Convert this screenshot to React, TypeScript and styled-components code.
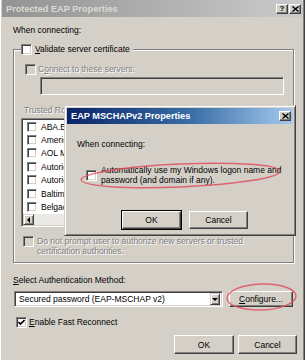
import React from "react";
import styled, { createGlobalStyle, css } from "styled-components";

const FACE = "#d4d0c8";

const Global = createGlobalStyle`
  html, body { margin: 0; padding: 0; background: ${FACE}; }
  body { font-family: "Liberation Sans", Arial, sans-serif; font-size: 8.5px; color: #000; }
  * { box-sizing: border-box; }
`;

const Window = styled.div`
  position: relative;
  width: 305px;
  height: 360px;
  overflow: hidden;
  background: ${FACE};
  padding: 0 2px;
  box-shadow: inset 1px 0 0 #fff, inset -1px 0 0 #404040, inset -2px 0 0 #808080;
`;

const TitleBar = styled.div<{ $active?: boolean }>`
  display: flex;
  align-items: center;
  justify-content: space-between;
  height: ${(p) => (p.$active ? 16 : 17)}px;
  padding: 0 2px 0 4px;
  font-weight: bold;
  font-size: 9.2px;
  white-space: nowrap;
  ${(p) =>
    p.$active
      ? css`
          background: linear-gradient(to right, #0a246a, #3a6ea5 55%, #a6caf0);
          color: #fff;
        `
      : css`
          background: linear-gradient(to right, #939393, #b4b4b4 60%, #cbcbcb);
          color: #dcd8d2;
        `}
`;

const CaptionButtons = styled.div`
  display: flex;
  gap: 1px;
`;

const CaptionButton = styled.span`
  display: flex;
  align-items: center;
  justify-content: center;
  width: 12px;
  height: 10px;
  background: ${FACE};
  border: 1px solid;
  border-color: #fff #404040 #404040 #fff;
  box-shadow: inset -1px -1px 0 #808080;
  color: #000;
  font-size: 8px;
  font-weight: bold;
  line-height: 1;
`;

const Body = styled.div`
  display: flex;
  flex-direction: column;
  padding: 8px 9px 0 11px;
`;

const Text = styled.div<{ $disabled?: boolean }>`
  line-height: 11px;
  white-space: nowrap;
  ${(p) =>
    p.$disabled &&
    css`
      color: #808080;
      text-shadow: 1px 1px 0 #fff;
    `}
`;

const U = styled.span`
  text-decoration: underline;
`;

const Box = styled.span<{ $disabled?: boolean; $size?: number }>`
  flex: none;
  display: inline-flex;
  align-items: center;
  justify-content: center;
  width: ${(p) => p.$size ?? 11}px;
  height: ${(p) => p.$size ?? 11}px;
  background: ${(p) => (p.$disabled ? FACE : "#fff")};
  border: 1px solid;
  border-color: #808080 #fff #fff #808080;
  box-shadow: inset 1px 1px 0 #404040, inset -1px -1px 0 ${FACE};
`;

const Check = ({ checked, disabled, size }: { checked?: boolean; disabled?: boolean; size?: number }) => (
  <Box $disabled={disabled} $size={size}>
    {checked && (
      <svg width="7" height="7" viewBox="0 0 7 7">
        <path d="M0.5 3 L2.5 5 L6.5 1" stroke="#000" strokeWidth="1.6" fill="none" />
      </svg>
    )}
  </Box>
);

const Group = styled.fieldset`
  margin: 8px 0 0;
  padding: 0 9px 6px 7px;
  min-width: 0;
  border: 1px solid #808080;
  box-shadow: 1px 1px 0 #fff, inset 1px 1px 0 #fff;
`;

const Legend = styled.legend`
  display: flex;
  align-items: center;
  gap: 3px;
  padding: 0 3px 0 0;
  background: ${FACE};
  line-height: 11px;
`;

const CheckRow = styled.div<{ $top?: number; $left?: number; $gap?: number; $align?: string }>`
  display: flex;
  align-items: ${(p) => p.$align ?? "center"};
  gap: ${(p) => p.$gap ?? 3}px;
  margin-top: ${(p) => p.$top ?? 0}px;
  margin-left: ${(p) => p.$left ?? 0}px;
`;

const DisabledInput = styled.div`
  height: 18px;
  margin: 2px 0 0 19px;
  background: ${FACE};
  border: 1px solid;
  border-color: #808080 #fff #fff #808080;
  box-shadow: inset 1px 1px 0 #404040, inset -1px -1px 0 ${FACE};
`;

const ListBox = styled.div`
  display: flex;
  flex-direction: column;
  height: 109px;
  margin-top: 2px;
  background: #fff;
  border: 1px solid;
  border-color: #808080 #fff #fff #808080;
  box-shadow: inset 1px 1px 0 #404040, inset -1px -1px 0 ${FACE};
  padding: 1px;
  overflow: hidden;
`;

const ListRow = styled.div`
  display: flex;
  align-items: center;
  gap: 4px;
  height: 13.4px;
  padding-left: 4px;
  white-space: nowrap;
`;

const HScroll = styled.div`
  display: flex;
  margin-top: auto;
  height: 11px;
  background: #ebe9e5;
`;

const ScrollButton = styled.span`
  display: flex;
  align-items: center;
  justify-content: center;
  width: 11px;
  height: 11px;
  background: ${FACE};
  border: 1px solid;
  border-color: ${FACE} #404040 #404040 ${FACE};
  box-shadow: inset 1px 1px 0 #fff, inset -1px -1px 0 #808080;
`;

const Tri = styled.span<{ $dir: "left" | "down" }>`
  width: 0;
  height: 0;
  ${(p) =>
    p.$dir === "left"
      ? css`
          border-top: 3px solid transparent;
          border-bottom: 3px solid transparent;
          border-right: 3px solid #000;
        `
      : css`
          border-left: 3.5px solid transparent;
          border-right: 3.5px solid transparent;
          border-top: 3.5px solid #000;
        `}
`;

const Wrap = styled.div<{ $disabled?: boolean }>`
  line-height: 10px;
  ${(p) =>
    p.$disabled &&
    css`
      color: #808080;
      text-shadow: 1px 1px 0 #fff;
    `}
`;

const ComboRow = styled.div`
  display: flex;
  align-items: flex-start;
  gap: 6px;
  margin-top: 5px;
  margin-left: 1px;
`;

const Combo = styled.div`
  display: flex;
  align-items: center;
  width: 209px;
  height: 16px;
  background: #fff;
  border: 1px solid;
  border-color: #808080 #fff #fff #808080;
  box-shadow: inset 1px 1px 0 #404040, inset -1px -1px 0 ${FACE};
  padding: 2px 2px 2px 4px;
`;

const ComboText = styled.span`
  flex: 1;
  white-space: nowrap;
`;

const DropButton = styled(ScrollButton)`
  width: 10px;
  height: 12px;
`;

const Button = styled.button<{ $w: number; $h?: number; $default?: boolean }>`
  display: flex;
  align-items: center;
  justify-content: center;
  width: ${(p) => p.$w}px;
  height: ${(p) => p.$h ?? 19}px;
  padding: 0;
  font: inherit;
  color: #000;
  background: ${FACE};
  border: 1px solid;
  border-color: #fff #404040 #404040 #fff;
  box-shadow: inset -1px -1px 0 #808080;
  ${(p) =>
    p.$default &&
    css`
      outline: 1px solid #000;
      border-color: #fff #404040 #404040 #fff;
    `}
`;

const ButtonRow = styled.div<{ $top: number; $gap: number; $justify?: string; $padLeft?: number }>`
  display: flex;
  justify-content: ${(p) => p.$justify ?? "flex-end"};
  gap: ${(p) => p.$gap}px;
  margin-top: ${(p) => p.$top}px;
  margin-right: ${(p) => (p.$justify ? 0 : -3)}px;
  padding-left: ${(p) => p.$padLeft ?? 0}px;
`;

const Dialog = styled.div`
  position: absolute;
  left: 64px;
  top: 105px;
  width: 232px;
  height: 131px;
  background: ${FACE};
  padding: 2px;
  border: 1px solid;
  border-color: ${FACE} #404040 #404040 ${FACE};
  box-shadow: inset 1px 1px 0 #fff, inset -1px -1px 0 #808080;
`;

const DialogBody = styled.div`
  display: flex;
  flex-direction: column;
  padding: 15px 0 0 10px;
`;

const Ellipse = styled.svg<{ $x: number; $y: number; $w: number; $h: number; $rot: number }>`
  position: absolute;
  left: ${(p) => p.$x}px;
  top: ${(p) => p.$y}px;
  width: ${(p) => p.$w}px;
  height: ${(p) => p.$h}px;
  transform: rotate(${(p) => p.$rot}deg);
  overflow: visible;
  pointer-events: none;
`;

const RedRing = ({ x, y, w, h, rot }: { x: number; y: number; w: number; h: number; rot: number }) => (
  <Ellipse $x={x} $y={y} $w={w} $h={h} $rot={rot} viewBox={`0 0 ${w} ${h}`}>
    <ellipse cx={w / 2} cy={h / 2} rx={w / 2 - 1} ry={h / 2 - 1} fill="none" stroke="#e0505e" strokeWidth="1.4" opacity="0.85" />
  </Ellipse>
);

const CloseGlyph = () => (
  <svg width="7" height="6" viewBox="0 0 7 6">
    <path d="M0.5 0.5 L6.5 5.5 M6.5 0.5 L0.5 5.5" stroke="#000" strokeWidth="1.4" />
  </svg>
);

const roots = [
  "ABA.ECOM Root CA",
  "America Online Root Certification Authority 1",
  "AOL Member CA",
  "Autoridad Certificadora de la Asociacion Nacional",
  "Autoridad Certificadora del Colegio Nacional",
  "Baltimore EZ by DST",
  "Belgacom E-Trust Primary CA",
];

export default function App() {
  return (
    <>
      <Global />
      <Window>
        <TitleBar>
          <span>Protected EAP Properties</span>
          <CaptionButtons>
            <CaptionButton>?</CaptionButton>
            <CaptionButton>
              <CloseGlyph />
            </CaptionButton>
          </CaptionButtons>
        </TitleBar>
        <Body>
          <Text>When connecting:</Text>
          <Group>
            <Legend>
              <Check />
              <span>
                <U>V</U>alidate server certificate
              </span>
            </Legend>
            <CheckRow $top={9} $left={4} $gap={2}>
              <Check disabled />
              <Text $disabled>
                C<U>o</U>nnect to these servers:
              </Text>
            </CheckRow>
            <DisabledInput />
            <CheckRow $top={10} $left={3}>
              <Text $disabled>Trusted Root Certification Authorities:</Text>
            </CheckRow>
            <ListBox>
              {roots.map((r, i) => (
                <ListRow key={i}>
                  <Check size={10} />
                  <span>{r}</span>
                </ListRow>
              ))}
              <HScroll>
                <ScrollButton>
                  <Tri $dir="left" />
                </ScrollButton>
              </HScroll>
            </ListBox>
            <CheckRow $top={9} $left={2} $align="flex-start">
              <Check disabled />
              <Wrap $disabled>
                Do not prompt user to authorize new servers or trusted
                <br />
                certification authorities.
              </Wrap>
            </CheckRow>
          </Group>
          <CheckRow $top={12}>
            <Text>
              <U>S</U>elect Authentication Method:
            </Text>
          </CheckRow>
          <ComboRow>
            <Combo>
              <ComboText>Secured password (EAP-MSCHAP v2)</ComboText>
              <DropButton>
                <Tri $dir="down" />
              </DropButton>
            </Combo>
            <Button $w={64} $h={16}>
              <U>C</U>onfigure...
            </Button>
          </ComboRow>
          <CheckRow $top={10} $left={3} $gap={2}>
            <Check checked />
            <Text>
              <U>E</U>nable Fast Reconnect
            </Text>
          </CheckRow>
          <ButtonRow $top={7} $gap={4}>
            <Button $w={60}>OK</Button>
            <Button $w={59}>Cancel</Button>
          </ButtonRow>
        </Body>
        <RedRing x={226} y={283} w={71} h={28} rot={-2} />
        <Dialog>
          <TitleBar $active>
            <span>EAP MSCHAPv2 Properties</span>
            <CaptionButton>
              <CloseGlyph />
            </CaptionButton>
          </TitleBar>
          <DialogBody>
            <Text>When connecting:</Text>
            <CheckRow $top={15} $left={9} $gap={4}>
              <Check />
              <Wrap>
                Automatically use my Windows logon name and
                <br />
                password (and domain if any).
              </Wrap>
            </CheckRow>
            <ButtonRow $top={26} $gap={8} $justify="flex-start" $padLeft={45}>
              <Button $w={59} $h={18} $default>
                OK
              </Button>
              <Button $w={59} $h={18}>
                Cancel
              </Button>
            </ButtonRow>
          </DialogBody>
          <RedRing x={15} y={57} w={201} h={25} rot={-2.5} />
        </Dialog>
      </Window>
    </>
  );
}
